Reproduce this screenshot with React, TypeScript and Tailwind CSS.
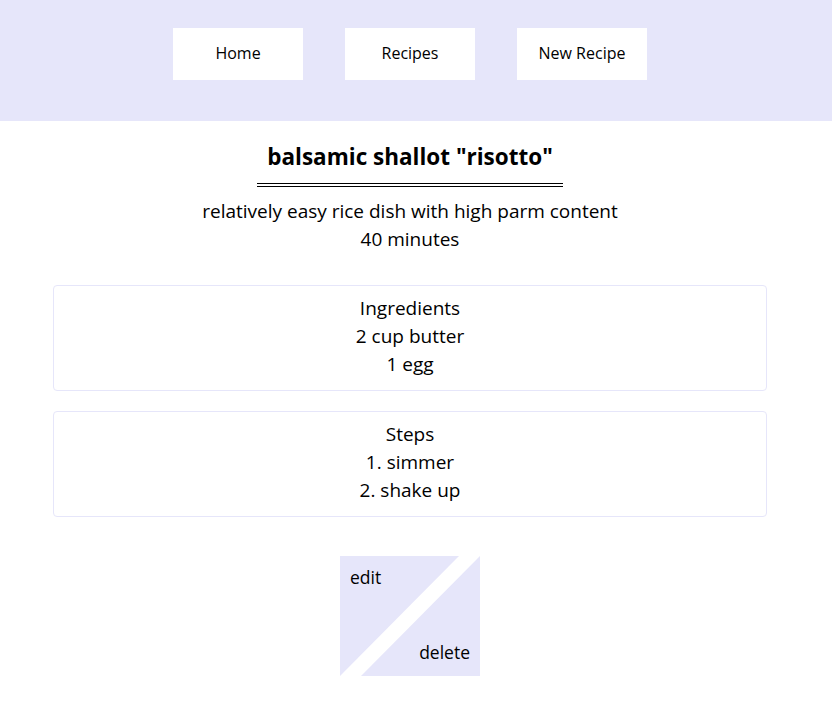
export default function App() {
  return (
    <div className="w-full min-h-[717px] bg-white text-black font-['Open_Sans','Noto_Sans',sans-serif]">
      <nav className="h-[121px] bg-[#e6e6fa]">
        <div className="w-[820px] flex justify-center items-start pt-[28px] gap-[42px]">
          {["Home", "Recipes", "New Recipe"].map((l) => (
            <button key={l} className="w-[130px] h-[52px] bg-white text-[16px] flex items-center justify-center pb-[2px]">
              {l}
            </button>
          ))}
        </div>
      </nav>

      <main className="w-[820px] flex flex-col items-center">
        <h1 className="mt-[22px] px-[10px] pb-[12px] text-[22.5px] leading-[28px] font-bold border-b-4 border-double border-black">
          balsamic shallot "risotto"
        </h1>
        <p className="mt-[10px] text-[19px] leading-[28px] text-center">
          relatively easy rice dish with high parm content
          <br />
          40 minutes
        </p>

        <section className="mt-[32px] w-[714px] border border-[#e6e6fa] rounded-[4px] pt-[8px] pb-[12px] text-center text-[19px] leading-[28px]">
          <div>Ingredients</div>
          <div>2 cup butter</div>
          <div>1 egg</div>
        </section>

        <section className="mt-[20px] w-[714px] border border-[#e6e6fa] rounded-[4px] pt-[8px] pb-[12px] text-center text-[19px] leading-[28px]">
          <div>Steps</div>
          <div>1. simmer</div>
          <div>2. shake up</div>
        </section>

        <div className="mt-[39px] w-[140px] h-[120px] grid grid-cols-1 grid-rows-1 text-[17.5px]">
          <button className="col-start-1 row-start-1 bg-[#e6e6fa] [clip-path:polygon(0_0,85%_0,0_100%)] flex items-start justify-start pl-[10px] pt-[8px]">
            edit
          </button>
          <button className="col-start-1 row-start-1 bg-[#e6e6fa] [clip-path:polygon(100%_0,100%_100%,15%_100%)] flex items-end justify-end pr-[10px] pb-[11px]">
            delete
          </button>
        </div>
      </main>
    </div>
  )
}
